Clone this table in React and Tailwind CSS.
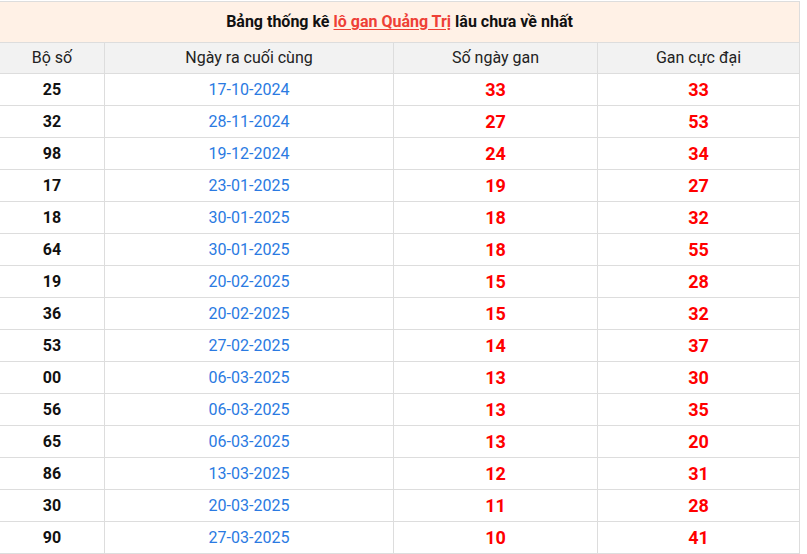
import React from "react";

const ROWS = [
  ["25", "17-10-2024", "33", "33"],
  ["32", "28-11-2024", "27", "53"],
  ["98", "19-12-2024", "24", "34"],
  ["17", "23-01-2025", "19", "27"],
  ["18", "30-01-2025", "18", "32"],
  ["64", "30-01-2025", "18", "55"],
  ["19", "20-02-2025", "15", "28"],
  ["36", "20-02-2025", "15", "32"],
  ["53", "27-02-2025", "14", "37"],
  ["00", "06-03-2025", "13", "30"],
  ["56", "06-03-2025", "13", "35"],
  ["65", "06-03-2025", "13", "20"],
  ["86", "13-03-2025", "12", "31"],
  ["30", "20-03-2025", "11", "28"],
  ["90", "27-03-2025", "10", "41"],
];

export default function App() {
  return (
    <div className="w-[807px] h-[554px] overflow-hidden bg-white font-['Roboto',sans-serif] pt-px">
      <table className="-ml-px w-[800px] table-fixed border-collapse text-center">
        <colgroup>
          <col className="w-[105px]" />
          <col className="w-[289px]" />
          <col className="w-[204px]" />
          <col className="w-[202px]" />
        </colgroup>
        <thead>
          <tr className="h-[41px] bg-[#fff1e6]">
            <th colSpan={4} className="border border-[#dddddd] text-[16px] font-bold text-[#111]">
              Bảng thống kê{" "}
              <a href="#" className="text-[#ee4036] underline underline-offset-2">
                lô gan Quảng Trị
              </a>{" "}
              lâu chưa về nhất
            </th>
          </tr>
          <tr className="h-[31px] bg-[#f2f2f2] text-[16px] text-[#222]">
            <th className="border border-[#dddddd] font-normal">Bộ số</th>
            <th className="border border-[#dddddd] font-normal">Ngày ra cuối cùng</th>
            <th className="border border-[#dddddd] font-normal">Số ngày gan</th>
            <th className="border border-[#dddddd] font-normal">Gan cực đại</th>
          </tr>
        </thead>
        <tbody>
          {ROWS.map(([so, ngay, gan, max]) => (
            <tr key={so} className="h-[32px]">
              <td className="border border-[#dddddd] text-[16px] font-bold text-[#111]">{so}</td>
              <td className="border border-[#dddddd] text-[16px] text-[#2a7ae2]">{ngay}</td>
              <td className="border border-[#dddddd] text-[18px] font-bold text-[#ff0000]">{gan}</td>
              <td className="border border-[#dddddd] text-[18px] font-bold text-[#ff0000]">{max}</td>
            </tr>
          ))}
        </tbody>
      </table>
    </div>
  );
}
